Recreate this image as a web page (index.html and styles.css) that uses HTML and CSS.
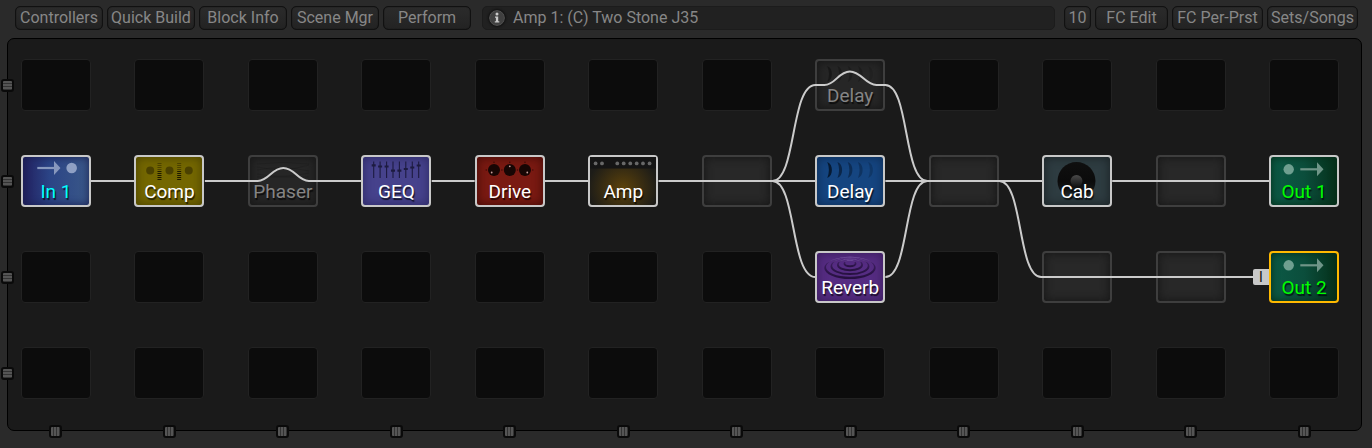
FILE: index.html
```html
<!DOCTYPE html>
<html lang="en">
<head>
<meta charset="utf-8">
<meta name="viewport" content="width=device-width, initial-scale=1">
<title>Layout grid</title>
<link rel="stylesheet" href="styles.css">
</head>
<body>
<header class="toolbar">
  <button class="tool tool-m">Controllers</button>
  <button class="tool tool-m">Quick Build</button>
  <button class="tool tool-m">Block Info</button>
  <button class="tool tool-m">Scene Mgr</button>
  <button class="tool tool-m">Perform</button>
  <div class="info">
    <svg class="info-icon" viewBox="0 0 16 16" aria-hidden="true">
      <circle cx="8" cy="8" r="7.4" fill="#404040" stroke="#505050" stroke-width="1"/>
      <circle cx="8" cy="4" r="1.5" fill="#c8c8c8"/>
      <path d="M6 6.5h3.2v4.8h1.1v1.300H5.800v-1.300h1.100V7.800H6z" fill="#c8c8c8"/>
    </svg>
    <span>Amp 1: (C) Two Stone J35</span>
  </div>
  <button class="tool tool-xs">10</button>
  <button class="tool tool-s">FC Edit</button>
  <button class="tool tool-l">FC Per-Prst</button>
  <button class="tool tool-l">Sets/Songs</button>
</header>

<main class="panel">
  <div class="grid">
    <!-- row 1 -->
    <div class="cell"></div><div class="cell"></div><div class="cell"></div><div class="cell"></div>
    <div class="cell"></div><div class="cell"></div><div class="cell"></div>
    <button class="block bypassed">
      <svg class="art" viewBox="0 0 66 48" aria-hidden="true">
        <g fill="#000">
          <path opacity=".35" d="M10.300 5C16.500 7 16.500 19 10.300 21Q13.500 13 10.300 5z"/>
          <path opacity=".25" d="M20.500 5C26.700 7 26.700 19 20.500 21Q23.700 13 20.500 5z"/>
          <path opacity=".2" d="M30.800 5C37 7 37 19 30.800 21Q34 13 30.800 5z"/>
          <path opacity=".2" d="M41 5C47.200 7 47.200 19 41 21Q44.200 13 41 5z"/>
          <path opacity=".12" d="M51.300 5C57.500 7 57.500 19 51.300 21Q54.500 13 51.300 5z"/>
        </g>
      </svg>
      <span class="label">Delay</span>
    </button>
    <div class="cell"></div><div class="cell"></div><div class="cell"></div><div class="cell"></div>

    <!-- row 2 -->
    <button class="block in">
      <svg class="art" viewBox="0 0 66 48" aria-hidden="true">
        <path d="M14.300 11H32" stroke="#8797bd" stroke-width="2.200"/>
        <path d="M31 4L37.500 11L31 18z" fill="#8797bd"/>
        <circle cx="48.700" cy="11" r="5.300" fill="#8fa0c4"/>
      </svg>
      <span class="label">In 1</span>
    </button>
    <button class="block comp">
      <svg class="art" viewBox="0 0 66 48" aria-hidden="true">
        <g fill="#4b4100"><circle cx="14.200" cy="13.500" r="4"/><circle cx="33.500" cy="13.500" r="4"/><circle cx="52.800" cy="13.500" r="4"/></g>
        <path d="M23.500 6V14M43.200 6V14" stroke="#3f3600" stroke-width="4" stroke-dasharray="1 1" opacity=".75"/>
        <path d="M23.500 14V23M43.200 14V23" stroke="#1e1900" stroke-width="4" stroke-dasharray="1 1"/>
      </svg>
      <span class="label">Comp</span>
    </button>
    <button class="block bypassed">
      <svg class="art" viewBox="0 0 66 48" aria-hidden="true">
        <g fill="none" stroke="#000" opacity=".12"><path d="M7 7Q33 4 59 7M7 10Q33 16 59 8M7 13Q33 8 59 14M7 17Q33 22 59 16M7 20H59"/></g>
      </svg>
      <span class="label">Phaser</span>
    </button>
    <button class="block geq">
      <svg class="art" viewBox="0 0 66 48" aria-hidden="true">
        <path d="M10.700 4.500V21M17.100 4.500V21M23.600 4.500V21M30 4.500V21M36.400 4.500V21M42.800 4.500V21M49.300 4.500V21M55.700 4.500V21" stroke="#1d1b40" stroke-width="1.100"/>
        <path d="M8.700 8.300h4M15.100 9.500h4M21.600 9.500h4M28 13.700h4M34.400 13.700h4M40.800 12h4M47.300 10.500h4M53.700 8.500h4" stroke="#1d1b40" stroke-width="2.200"/>
      </svg>
      <span class="label">GEQ</span>
    </button>
    <button class="block drive">
      <svg class="art" viewBox="0 0 66 48" aria-hidden="true">
        <g fill="#170604"><circle cx="17" cy="13" r="6"/><circle cx="32.800" cy="13" r="6"/><circle cx="48" cy="13" r="6"/></g>
        <g fill="#3d0c07"><circle cx="9.300" cy="13" r=".8"/><circle cx="24.900" cy="13" r=".8"/><circle cx="40.500" cy="13" r=".8"/><circle cx="55.800" cy="13" r=".8"/><circle cx="17" cy="5.200" r=".8"/><circle cx="32.800" cy="5.200" r=".8"/><circle cx="48" cy="5.200" r=".8"/></g>
        <g fill="#c9a09c"><circle cx="14.700" cy="15.500" r=".9"/><circle cx="32.800" cy="9.300" r=".9"/><circle cx="50.300" cy="15.500" r=".9"/></g>
      </svg>
      <span class="label">Drive</span>
    </button>
    <button class="block amp">
      <svg class="art" viewBox="0 0 66 48" aria-hidden="true">
        <path d="M0 0H66V11.500H0z" fill="#151515"/>
        <g fill="#686868"><circle cx="5.600" cy="6.400" r="1.900"/><circle cx="12" cy="6.400" r="1.900"/><circle cx="27.300" cy="6.400" r="1.900"/><circle cx="33.700" cy="6.400" r="1.900"/><circle cx="40.300" cy="6.400" r="1.900"/><circle cx="46.700" cy="6.400" r="1.900"/><circle cx="53" cy="6.400" r="1.900"/><circle cx="59.600" cy="6.400" r="1.900"/></g>
      </svg>
      <span class="label">Amp</span>
    </button>
    <div class="shunt"></div>
    <button class="block delay">
      <svg class="art" viewBox="0 0 66 48" aria-hidden="true">
        <g fill="#061a33">
          <path d="M10.300 5C16.500 7 16.500 19 10.300 21Q13.500 13 10.300 5z"/>
          <path opacity=".7" d="M20.500 5C26.700 7 26.700 19 20.500 21Q23.700 13 20.500 5z"/>
          <path opacity=".55" d="M30.800 5C37 7 37 19 30.800 21Q34 13 30.800 5z"/>
          <path opacity=".4" d="M41 5C47.200 7 47.200 19 41 21Q44.200 13 41 5z"/>
          <path opacity=".3" d="M51.300 5C57.500 7 57.500 19 51.300 21Q54.500 13 51.300 5z"/>
        </g>
      </svg>
      <span class="label">Delay</span>
    </button>
    <div class="shunt"></div>
    <button class="block cab">
      <svg class="art" viewBox="0 0 66 48" aria-hidden="true">
        <defs>
          <linearGradient id="cone" x1="0" y1="0" x2="0" y2="1"><stop offset="0" stop-color="#0f0f0f"/><stop offset=".5" stop-color="#0b0b0b"/><stop offset=".75" stop-color="#141718"/><stop offset="1" stop-color="#263135"/></linearGradient>
          <linearGradient id="cap" x1="0" y1="0" x2="0" y2="1"><stop offset="0" stop-color="#4a4a4a"/><stop offset="1" stop-color="#111"/></linearGradient>
        </defs>
        <circle cx="32.500" cy="24" r="19" fill="url(#cone)"/>
        <circle cx="32.500" cy="24" r="6" fill="url(#cap)"/>
      </svg>
      <span class="label">Cab</span>
    </button>
    <div class="shunt"></div>
    <button class="block out">
      <svg class="art" viewBox="0 0 66 48" aria-hidden="true">
        <circle cx="17.700" cy="12.300" r="5.200" fill="#6f9f90"/>
        <path d="M29.300 12.300H47" stroke="#6f9588" stroke-width="2.200"/>
        <path d="M46 5.300L52.500 12.300L46 19.300z" fill="#6f9588"/>
      </svg>
      <span class="label">Out 1</span>
    </button>

    <!-- row 3 -->
    <div class="cell"></div><div class="cell"></div><div class="cell"></div><div class="cell"></div>
    <div class="cell"></div><div class="cell"></div><div class="cell"></div>
    <button class="block reverb">
      <svg class="art" viewBox="0 0 66 48" aria-hidden="true">
        <defs>
          <linearGradient id="ripple" x1="0" y1="0" x2="0" y2="1"><stop offset="0" stop-color="#8a68b4"/><stop offset=".3" stop-color="#3a1c5c"/><stop offset="1" stop-color="#25103e"/></linearGradient>
        </defs>
        <g fill="url(#ripple)" fill-rule="evenodd">
          <path d="M26.500 10.700a6.500 3.500 0 1 0 13 0a6.500 3.500 0 1 0-13 0zM28.200 10a4.800 2.200 0 1 0 9.600 0a4.800 2.200 0 1 0-9.600 0z"/>
          <path d="M20 12a13 6.200 0 1 0 26 0a13 6.200 0 1 0-26 0zM21.700 11.200a11.300 5 0 1 0 22.600 0a11.300 5 0 1 0-22.600 0z"/>
          <path d="M13.500 13.400a19.500 8.700 0 1 0 39 0a19.500 8.700 0 1 0-39 0zM15.200 12.600a17.800 7.500 0 1 0 35.600 0a17.800 7.500 0 1 0-35.600 0z"/>
          <path d="M7.300 14.900a25.700 11.100 0 1 0 51.400 0a25.700 11.100 0 1 0-51.400 0zM9 14a24 9.800 0 1 0 48 0a24 9.800 0 1 0-48 0z"/>
        </g>
      </svg>
      <span class="label">Reverb</span>
    </button>
    <div class="cell"></div>
    <div class="shunt"></div>
    <div class="shunt"></div>
    <button class="block out selected">
      <span class="badge">I</span>
      <svg class="art" viewBox="0 0 66 48" aria-hidden="true">
        <circle cx="17.700" cy="12.300" r="5.200" fill="#6f9f90"/>
        <path d="M29.300 12.300H47" stroke="#6f9588" stroke-width="2.200"/>
        <path d="M46 5.300L52.500 12.300L46 19.300z" fill="#6f9588"/>
      </svg>
      <span class="label">Out 2</span>
    </button>

    <!-- row 4 -->
    <div class="cell"></div><div class="cell"></div><div class="cell"></div><div class="cell"></div>
    <div class="cell"></div><div class="cell"></div><div class="cell"></div><div class="cell"></div>
    <div class="cell"></div><div class="cell"></div><div class="cell"></div><div class="cell"></div>

    <svg class="wires" viewBox="0 0 1319 340" preserveAspectRatio="none" aria-hidden="true">
      <path d="M70 122H114M184 122H237C248 122 251 109 262.500 109S277 122 288 122H341M411 122H454M524 122H568M638 122H795M865 122H1022M1092 122H1249"/>
      <path d="M752 122C776 122 770 26 795 26H804C815 26 818 12.500 829.500 12.500S845 26 856 26H865C889 26 883 122 907 122"/>
      <path d="M752 122C776 122 770 218 795 218M865 218C889 218 883 122 907 122"/>
      <path d="M979 122C1003 122 997 218 1021 218H1234"/>
    </svg>
  </div>

  <div class="rail-left">
    <button class="grip rows" aria-label="Row 1"></button>
    <button class="grip rows" aria-label="Row 2"></button>
    <button class="grip rows" aria-label="Row 3"></button>
    <button class="grip rows" aria-label="Row 4"></button>
  </div>
  <div class="rail-bottom">
    <button class="grip cols" aria-label="Column 1"></button>
    <button class="grip cols" aria-label="Column 2"></button>
    <button class="grip cols" aria-label="Column 3"></button>
    <button class="grip cols" aria-label="Column 4"></button>
    <button class="grip cols" aria-label="Column 5"></button>
    <button class="grip cols" aria-label="Column 6"></button>
    <button class="grip cols" aria-label="Column 7"></button>
    <button class="grip cols" aria-label="Column 8"></button>
    <button class="grip cols" aria-label="Column 9"></button>
    <button class="grip cols" aria-label="Column 10"></button>
    <button class="grip cols" aria-label="Column 11"></button>
    <button class="grip cols" aria-label="Column 12"></button>
  </div>
</main>
</body>
</html>
```

FILE: styles.css
```css
* {
  box-sizing: border-box;
}

body {
  margin: 0;
  background: #2a2a2a;
  color: #878787;
  font: 16px/20px Roboto, "Liberation Sans", sans-serif;
}

button {
  margin: 0;
  padding: 0;
  font: inherit;
  color: inherit;
  cursor: pointer;
}

/* Toolbar */
.toolbar {
  display: flex;
  gap: 4px;
  padding: 6px 14px 8px 15px;
}

.tool {
  flex: none;
  height: 24px;
  border: 1px solid #111;
  border-radius: 5px;
  background: linear-gradient(#2b2b2b, #232323);
  box-shadow: inset 0 0 1px #000;
  white-space: nowrap;
}

.tool-xs { width: 27px; }
.tool-s { width: 73px; }
.tool-m { width: 88px; }
.tool-l { width: 91px; }

.info {
  flex: 1;
  display: flex;
  align-items: center;
  gap: 8px;
  min-width: 0;
  height: 24px;
  margin: 0 5px 0 7px;
  padding: 0 6px;
  border: 1px solid #1c1c1c;
  border-radius: 5px;
  background: #212121;
  white-space: nowrap;
}

.info-icon {
  width: 16px;
  height: 16px;
  border-radius: 50%;
  box-shadow: 0 0 2px 1px #111;
}

/* Panel */
.panel {
  position: relative;
  margin: 0 10px 17px 7px;
  padding: 20px 22px 31px 13px;
  border: 1px solid #000;
  border-radius: 7px;
  background: #1a1a1a;
}

.grid,
.rail-bottom {
  display: grid;
  grid-template-columns: repeat(12, minmax(0, 1fr));
  column-gap: 3.3%;
}

.grid {
  position: relative;
  grid-auto-rows: 52px;
  row-gap: 44px;
}

.cell {
  border: 1px solid #222;
  border-radius: 4px;
  background: #0c0c0c;
}

.shunt {
  border: 2px solid #3e3e3e;
  border-radius: 4px;
  background: #282828;
  box-shadow: inset 0 0 9px 1px #181818;
}

/* Blocks */
.block {
  position: relative;
  display: grid;
  grid-template: 100% / 100%;
  border: 2px solid #c8c8c8;
  border-radius: 4px;
  color: #fff;
  font-size: 19px;
  line-height: 22px;
}

.art,
.label {
  grid-area: 1 / 1;
}

.art {
  width: 100%;
  height: 100%;
}

.label {
  z-index: 1;
  align-self: end;
  justify-self: center;
  margin-bottom: 2px;
  text-shadow: 1px 2px 1px rgb(0 0 0 / 70%);
}

.in {
  background: linear-gradient(90deg, #22205f, #2b4486 40%, #3a5888);
  box-shadow: inset 0 0 8px #1a1f50;
  color: #0ff;
}

.comp {
  background: #746700;
  box-shadow: inset 0 0 10px 1px #4e4500;
}

.geq {
  background: #46428c;
  box-shadow: inset 0 0 10px 1px #302c68;
}

.drive {
  background: #7a1a12;
  box-shadow: inset 0 0 10px 1px #480c08;
}

.amp {
  background: radial-gradient(ellipse at 50% 65%, #5c420a, #1d1c18 75%);
}

.delay {
  background: #154580;
  box-shadow: inset 0 0 10px 1px #0f2f58;
}

.reverb {
  background: #552c82;
  box-shadow: inset 0 0 10px 1px #3c1e5e;
}

.cab {
  background: #2e3c41;
  box-shadow: inset 0 0 10px 1px #1c2427;
}

.out {
  background: linear-gradient(90deg, #0c5a46, #0b4e3c 50%, #05301a);
  box-shadow: inset 0 0 9px #052c18;
  color: #0f0;
}

.bypassed {
  border-color: #3e3e3e;
  background: #262626;
  box-shadow: inset 0 0 9px 1px #171717;
  color: #858585;
}

.selected {
  border-color: #ffb900;
}

.badge {
  position: absolute;
  top: calc(50% - 8px);
  right: calc(100% + 2px);
  width: 16px;
  height: 16px;
  border-radius: 2px 0 0 2px;
  background: #c8c8c8;
  color: #111;
  font-size: 14px;
  line-height: 16px;
}

.wires {
  position: absolute;
  inset: 0;
  width: 100%;
  height: 100%;
  overflow: visible;
  pointer-events: none;
}

.wires path {
  fill: none;
  stroke: #cbcbcb;
  stroke-width: 2px;
  vector-effect: non-scaling-stroke;
}

/* Row and column grips straddle the panel border */
.rail-left {
  position: absolute;
  top: 20px;
  left: -7px;
  display: grid;
  grid-auto-rows: 52px;
  row-gap: 44px;
  align-items: center;
}

.rail-bottom {
  position: absolute;
  right: 22px;
  bottom: -8px;
  left: 13px;
  justify-items: center;
}

.grip {
  width: 13px;
  height: 13px;
  border: 2px solid #0a0a0a;
  border-radius: 3px;
  background-color: #333;
}

.rows {
  background-image: repeating-linear-gradient(#555 0 2px, #333 2px 3px);
}

.cols {
  background-image: repeating-linear-gradient(90deg, #555 0 2px, #333 2px 3px);
}
```
